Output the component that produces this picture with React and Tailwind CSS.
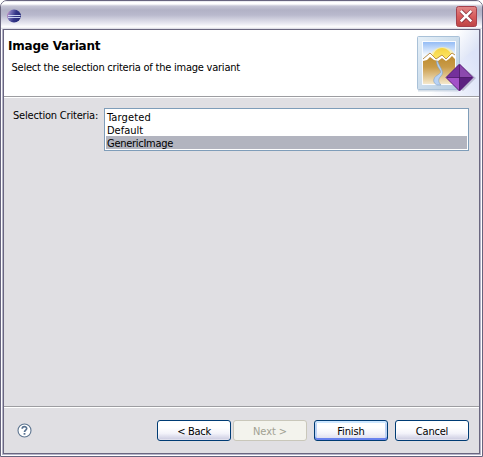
import React from 'react';

const tahoma = "font-['DejaVu_Sans_Condensed','DejaVu_Sans',sans-serif] [font-stretch:condensed]";

function EclipseIcon() {
  return (
    <svg width="14" height="14" viewBox="0 0 14 14" className="block">
      <defs>
        <linearGradient id="ball" x1="0" y1="0" x2="1" y2="0.3">
          <stop offset="0" stopColor="#e8a0c8" />
          <stop offset="0.3" stopColor="#7873b8" />
          <stop offset="0.65" stopColor="#343687" />
          <stop offset="1" stopColor="#262a79" />
        </linearGradient>
      </defs>
      <ellipse cx="7" cy="7" rx="7" ry="6.4" fill="url(#ball)" />
      <path d="M1 6.5H13.5M1 8.5H13.5" stroke="#d9e2fa" strokeWidth="0.9" />
    </svg>
  );
}

function CloseButton() {
  return (
    <svg width="21" height="21" viewBox="0 0 21 21" className="block">
      <defs>
        <linearGradient id="close" x1="0" y1="0" x2="0" y2="1">
          <stop offset="0" stopColor="#e08a8a" />
          <stop offset="0.5" stopColor="#d85c5c" />
          <stop offset="1" stopColor="#bd4444" />
        </linearGradient>
      </defs>
      <rect x="0.5" y="0.5" width="20" height="20" rx="2" fill="url(#close)" stroke="#a4404c" />
      <path d="M5 5L15.5 15.5M15.5 5L5 15.5" stroke="#8d3440" strokeWidth="4" />
      <path d="M4.8 4.8L15.3 15.3M15.3 4.8L4.8 15.3" stroke="#fff" strokeWidth="2.6" />
    </svg>
  );
}

function Banner() {
  return (
    <svg width="64" height="66" viewBox="415 30 64 66" className="block">
      <defs>
        <linearGradient id="wash" gradientUnits="userSpaceOnUse" x1="458" y1="30" x2="479" y2="44">
          <stop offset="0" stopColor="#ffffff" />
          <stop offset="1" stopColor="#dde4f6" />
        </linearGradient>
        <linearGradient id="swoosh" gradientUnits="userSpaceOnUse" x1="425" y1="92" x2="479" y2="66">
          <stop offset="0" stopColor="#ffffff" />
          <stop offset="1" stopColor="#dce3f8" />
        </linearGradient>
        <linearGradient id="frame" x1="0" y1="0" x2="1" y2="1">
          <stop offset="0" stopColor="#e6f0f8" />
          <stop offset="1" stopColor="#b4cbe0" />
        </linearGradient>
        <linearGradient id="sky" x1="0" y1="0" x2="0" y2="1">
          <stop offset="0" stopColor="#94bcf5" />
          <stop offset="0.3" stopColor="#f2f8ff" />
        </linearGradient>
        <linearGradient id="sun" x1="0" y1="0" x2="0" y2="1">
          <stop offset="0" stopColor="#f5d240" />
          <stop offset="1" stopColor="#ffe96a" />
        </linearGradient>
        <linearGradient id="ground" x1="0" y1="0" x2="0" y2="1">
          <stop offset="0" stopColor="#b98728" />
          <stop offset="0.45" stopColor="#c99b48" />
          <stop offset="1" stopColor="#f5e8cc" />
        </linearGradient>
      </defs>
      <path d="M456 30H479V96H456Z" fill="url(#wash)" />
      <path d="M479 47C467 53 460 62 455 72C448 84 438 92 422 96H479Z" fill="url(#swoosh)" />
      <path d="M418 90H460L458 91.5H418Z" fill="#b9c8d9" opacity="0.6" />
      <rect x="417.5" y="36.5" width="42" height="53" rx="1" fill="url(#frame)" stroke="#a9c1d8" />
      <rect x="422" y="41" width="34" height="44" fill="#f8fbff" />
      <rect x="423" y="42" width="32" height="42" fill="url(#sky)" />
      <path d="M430 60C430 43 454 43 455 58V60Z" fill="#fff0a0" opacity="0.7" />
      <path d="M432 60C433 44 451 44 453 60Z" fill="url(#sun)" />
      <path d="M423 59L430 53L436 59L442 55L446 59L452 53L455 55V84H423Z" fill="url(#ground)" />
      <path d="M423 59L430 53L436 59L442 55L446 59L452 53L455 55V59L452 56L449 59L446 61L442 58L438 61L434 60L430 57L427 60L423 61Z" fill="#fff" />
      <path d="M423 59L430 53L436 59L442 55L446 59L452 53L455 55" fill="none" stroke="#ad7f36" strokeWidth="0.8" />
      <path d="M436.5 61C437 67 439 68 440.5 71C442 74 435 75 434 79C433 82 435 84 437 85H441C438 82 438 79 441 76C445 72 440 68 437.5 61Z" fill="#b7d2f5" stroke="#819fc0" strokeWidth="0.6" />
      <path d="M463 67L476 78L463 91L459 88Z" fill="#817d9b" opacity="0.4" />
      <path d="M459.5 64L446 77.5L459.5 91L473 77.5Z" fill="#6c2693" />
      <path d="M459.5 64L446 77.5H459.5Z" fill="#74309b" />
      <path d="M459.5 64L473 77.5H459.5Z" fill="#8c49ae" />
      <path d="M446 77.5H459.5V91Z" fill="#a251c8" />
      <path d="M459.5 77.5H473L459.5 91Z" fill="#5c2080" />
      <path d="M459.5 65V90M447 77.5H472" stroke="#43165f" strokeWidth="0.7" />
      <path d="M459.5 64L446 77.5L459.5 91L473 77.5Z" fill="none" stroke="#581f77" strokeWidth="0.8" />
    </svg>
  );
}

function HelpIcon() {
  return (
    <svg width="15" height="15" viewBox="0 0 15 15" className="block">
      <circle cx="7.5" cy="7.5" r="6.5" fill="#fff" stroke="#5d7590" strokeWidth="1.1" />
      <path d="M5.2 5.8C5.2 2.9 9.7 3 9.7 5.5C9.7 7 7.5 7.2 7.5 9" fill="none" stroke="#587291" strokeWidth="1.7" />
      <rect x="6.6" y="10" width="1.8" height="1.7" fill="#587291" />
    </svg>
  );
}

function Button({ children, look, text }) {
  return (
    <button className={`flex h-[21px] w-[74px] items-center justify-center rounded-[3px] border p-0 leading-none ${look}`}>
      <span className={`relative top-px ${text}`}>{children}</span>
    </button>
  );
}

const normal = 'border-[#003c74] bg-linear-to-b from-white from-35% via-[#f3f3fa] via-65% to-[#c9c9df] shadow-[inset_0_0_0_1px_rgba(255,255,255,0.4)]';
const focused = 'border-[#003c74] bg-linear-to-b from-white from-35% via-[#f3f3fa] via-65% to-[#d8d8eb] shadow-[inset_0_-2px_0_#6982ee,inset_0_2px_0_#cee7ff,inset_2px_0_0_#bdd3f5,inset_-2px_0_0_#bdd3f5]';
const disabled = 'border-[#c9c7ba] bg-[#f3f3ed] text-[#a1a192]';

export default function App() {
  return (
    <div className={`flex h-[457px] w-[483px] flex-col overflow-hidden rounded-t-[7px] border border-[#67647e] bg-white text-[11px] leading-[13px] text-black ${tahoma}`}>
      <header className="flex h-[28px] shrink-0 items-start justify-between bg-[linear-gradient(180deg,#d7d7e2_0,#fff_1px,#fff_3px,#c5c5d5_5px,#b2b2c6_9px,#b9b9cd_14px,#e5e5ef_22px,#fff_26px,#d4d4df_28px)] pr-[5px] pl-[6px]">
        <div className="mt-2"><EclipseIcon /></div>
        <div className="mt-[5px]"><CloseButton /></div>
      </header>
      <div className="flex min-h-0 grow flex-col border-x border-b border-white">
        <div className="flex min-h-0 grow flex-col border-x border-b border-[#b5b4c9]">
          <main className="flex min-h-0 grow flex-col border border-[#6a6780] bg-[#e0dfe3]">
            <section className="flex h-[66px] shrink-0 justify-between bg-white">
              <div className="pt-[10px] pl-1">
                <h1 className="font-['DejaVu_Sans',sans-serif] text-[12px] leading-[13px] font-bold tracking-[-0.22px] [font-stretch:normal]">Image Variant</h1>
                <p className="mt-[8px] ml-[3.5px] tracking-[-0.23px] whitespace-nowrap">Select the selection criteria of the image variant</p>
              </div>
              <Banner />
            </section>
            <div className="h-[2px] shrink-0 border-t border-b border-t-[#9d9da1] border-b-white" />
            <section className="flex grow pt-[10px] pr-[10px] pl-[9px]">
              <label className="w-[91px] shrink-0 pt-px tracking-[-0.19px] whitespace-nowrap">Selection Criteria:</label>
              <ul className="h-[43px] grow border border-[#7f9db9] bg-white p-px">
                <li className="h-[13px] pt-px pl-px tracking-[0.15px]">Targeted</li>
                <li className="h-[13px] pt-px pl-px">Default</li>
                <li className="h-[13px] bg-[#b2b4bf] pt-px pl-px tracking-[-0.28px]">GenericImage</li>
              </ul>
            </section>
            <div className="h-[2px] shrink-0 border-t border-b border-t-[#9d9da1] border-b-white" />
            <footer className="flex h-[45px] shrink-0 items-start pt-3 pr-[10px] pl-3">
              <div className="mt-[3px] ml-[0.5px]"><HelpIcon /></div>
              <div className="ml-auto flex gap-[7px]">
                <div className="flex gap-[2px]">
                  <Button look={normal} text="tracking-[-0.3px]">&lt; Back</Button>
                  <Button look={disabled} text="tracking-[-0.1px]">Next &gt;</Button>
                </div>
                <Button look={focused} text="tracking-[-0.1px]">Finish</Button>
                <Button look={normal} text="tracking-[-0.2px]">Cancel</Button>
              </div>
            </footer>
          </main>
        </div>
      </div>
    </div>
  );
}
